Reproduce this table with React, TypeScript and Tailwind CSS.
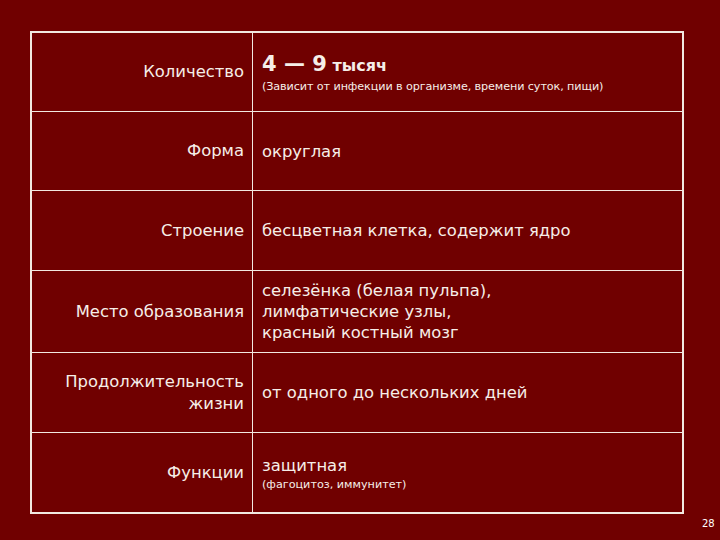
import React from 'react';

type Row = {
  label: React.ReactNode;
  value: React.ReactNode;
  h: string;
};

const rows: Row[] = [
  {
    label: 'Количество',
    h: 'h-[79px]',
    value: (
      <div className="flex flex-col">
        <div className="font-bold leading-[26px]">
          <span className="text-[21px]">4 — 9</span> <span className="text-[16px]">тысяч</span>
        </div>
        <div className="text-[11.2px] leading-[15px] tracking-[-0.1px]">
          (Зависит от инфекции в организме, времени суток, пищи)
        </div>
      </div>
    ),
  },
  { label: 'Форма', h: 'h-[79px]', value: 'округлая' },
  { label: 'Строение', h: 'h-[80px]', value: 'бесцветная клетка, содержит ядро' },
  {
    label: 'Место образования',
    h: 'h-[82px]',
    value: (
      <>
        селезёнка (белая пульпа),
        <br />
        лимфатические узлы,
        <br />
        красный костный мозг
      </>
    ),
  },
  {
    label: (
      <>
        Продолжительность
        <br />
        жизни
      </>
    ),
    h: 'h-[80px]',
    value: 'от одного до нескольких дней',
  },
  {
    label: 'Функции',
    h: 'h-[79px]',
    value: (
      <div className="flex flex-col pt-[2px]">
        <div className="leading-[22px]">защитная</div>
        <div className="text-[11.2px] leading-[15px]">(фагоцитоз, иммунитет)</div>
      </div>
    ),
  },
];

export default function App() {
  return (
    <div
      className="w-[720px] h-[540px] bg-[#700000] text-[#f6eee8] relative overflow-hidden"
      style={{ fontFamily: '"DejaVu Sans", Verdana, sans-serif' }}
    >
      <div className="pt-[31px] pl-[30px]">
        <div className="w-[654px] border-2 border-[#f2e8e0]">
          {rows.map((r, i) => (
            <div
              key={i}
              className={`flex ${r.h} ${i < rows.length - 1 ? 'border-b border-[#f2e8e0]' : ''}`}
            >
              <div className="w-[221px] shrink-0 border-r border-[#f2e8e0] flex items-center justify-end text-right pr-[8px] text-[16.4px] leading-[22px]">
                <div>{r.label}</div>
              </div>
              <div className="flex-1 flex items-center pl-[9px] text-[16.4px] leading-[21px]">
                <div>{r.value}</div>
              </div>
            </div>
          ))}
        </div>
      </div>
      <div className="absolute left-[702px] top-[516px] text-[10px] text-white">28</div>
    </div>
  );
}
